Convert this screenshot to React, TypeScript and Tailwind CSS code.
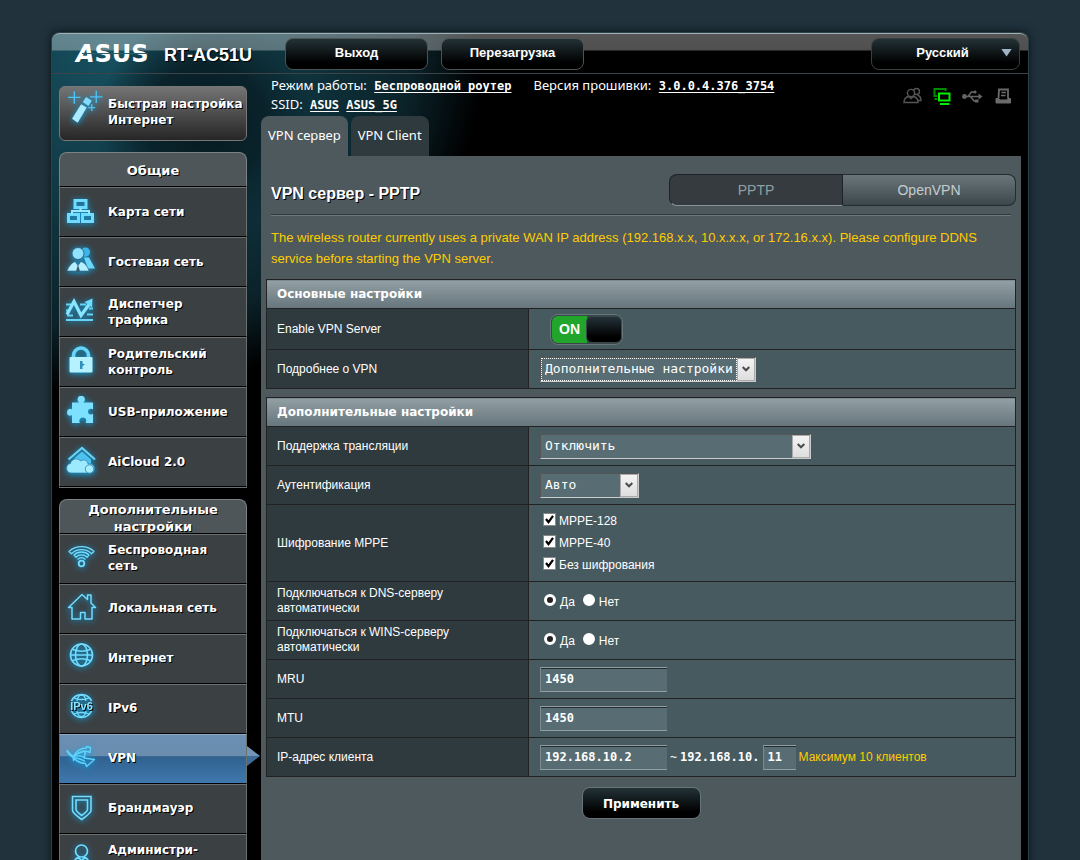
import React, { useState } from 'react';
import clsx from 'clsx';

const shadow = '[text-shadow:1px_1px_0_#000]';
const verdana = "font-['DejaVu_Sans',sans-serif]";
const arial = "font-['Liberation_Sans',sans-serif]";
const noto = "font-['Noto_Sans',sans-serif]";
const mono = "font-['DejaVu_Sans_Mono',monospace]";

/* ---------- icons ---------- */

type IconProps = { children: React.ReactNode; size?: number };

const Glow: React.FC<IconProps> = ({ children, size = 32 }) => (
  <svg
    width={size}
    height={size}
    viewBox="0 0 32 32"
    fill="none"
    stroke="none"
    className="shrink-0 [filter:drop-shadow(0_1px_3px_#0aa5e8)]"
    aria-hidden="true"
  >
    {children}
  </svg>
);

const icons: Record<string, React.ReactNode> = {
  wand: (
    <Glow size={36}>
      <path d="M4.500 26.500 12.500 13.500l5 3L9.500 30z" fill="#a9ecff" />
      <path d="M14 11.500 17 7l5 3.500-3 4.500z" fill="#7fdcff" />
      <path d="M6.500 2v11M1 7.500h11M26 1.500v11M20.500 7h11M22 13.500v6M19 16.500h6" stroke="#4fc4f2" strokeWidth="1.200" />
    </Glow>
  ),
  map: (
    <Glow>
      <path d="M10 4.500h11v7H10zM3.500 18.500h10v7h-10zM17.500 18.500h10v7h-10z" stroke="#6fdcff" strokeWidth="3" />
      <path d="M15.500 12v3.500M7 18v-3h17v3" stroke="#9be9ff" strokeWidth="2" />
    </Glow>
  ),
  guests: (
    <Glow>
      <circle cx="20.500" cy="6" r="4.500" fill="#3db5e8" />
      <path d="M19 11.500h5l6 11h-7z" fill="#6ed6fa" />
      <circle cx="13" cy="7.500" r="6" fill="#8fe3ff" stroke="#37607a" strokeWidth="1" />
      <path d="M2 25c2-5 4.500-8 8-9.500l3 4 3-4c4 1.500 6.500 4.500 8 9.500z" fill="#b4f0ff" stroke="#37607a" strokeWidth=".6" />
      <path d="m13 18.500-2 7h4z" fill="#3b5a68" />
    </Glow>
  ),
  traffic: (
    <Glow>
      <path d="M1 8.500h5M15 8.500h6M24 12.500h4M1 14.500h4M2 19.500h6M22 18.500h6M1 24h27" stroke="#65d3f8" strokeWidth="2" />
      <path d="M2 18.500 9 5.500l7 14 8-11" stroke="#8ae6ff" strokeWidth="3.200" />
      <path d="m19.500 6 8-3.500-.5 9z" fill="#6fdcff" />
    </Glow>
  ),
  lock: (
    <Glow>
      <path d="M8.500 13V9.500a7.500 7.500 0 0 1 15 0V13" stroke="#67d5fa" strokeWidth="3.600" />
      <rect x="4.500" y="11" width="23" height="15.500" rx="1" fill="#b5f1ff" />
      <path d="M15 15h2.500v2.500l2.500 1-2.500 1.500v3H15z" fill="#2f90bd" />
    </Glow>
  ),
  puzzle: (
    <Glow>
      <path
        d="M7 6.500h7c-1-1-1.500-2-1.500-3a3.700 3.700 0 0 1 7.400 0c0 1-.5 2-1.500 3H28v7c-1-1-4.500-1.500-5 1.700-.4 3.600 3.500 4 5 2.300V27h-7.500c1.500-2 1-5.500-2.500-5.500S13.500 25 15 27H7v-8c-1.500 1.500-5 1-5-2.500S5.500 12 7 13.500z"
        fill="#7ee0ff"
      />
    </Glow>
  ),
  cloud: (
    <Glow>
      <path d="M3.500 13.500 17 2l13 11.500" stroke="#67d2f8" strokeWidth="2.200" />
      <path d="M9 12.500 17 5.500l9 8V20H9z" fill="#4fc3ef" />
      <path
        d="M6 27c-5.500 0-6-9-.5-9.500.5-5 8-6 10-2.500 4-2.500 7.500 0 7.500 3 8-1.500 8.500 9 2.500 9z"
        fill="#9deaff"
        stroke="#2c7da3"
        strokeWidth=".7"
      />
      <circle cx="24.500" cy="23" r="4.200" fill="#a9edff" stroke="#2c7da3" strokeWidth=".8" />
    </Glow>
  ),
  wifi: (
    <Glow>
      <g stroke="#71dcff" strokeWidth="1.300" strokeLinejoin="round">
        <path d="M4 9.500c6.500-6.500 18.500-6.500 25 0l-2.500 2.300c-5-5.500-15-5.500-20 0z" />
        <path d="M9 13c4-4 11-4 15 0l-2 2.200c-3-3-8-3-11 0z" />
        <path d="M12.500 17.500c2.500-2.300 5.500-2.300 8 0" />
        <circle cx="16.500" cy="21.500" r="2.800" strokeWidth="1.800" />
      </g>
    </Glow>
  ),
  house: (
    <Glow>
      <path
        d="M7 15.500H3.500L17 2.500l5.500 5V3h3.500v8l4.500 4.500H27v11.500h-7v-6.500h-4.500V27H7z"
        stroke="#71dcff"
        strokeWidth="1.500"
        strokeLinejoin="round"
      />
    </Glow>
  ),
  globe: (
    <Glow>
      <g stroke="#71dcff" strokeWidth="1.600">
        <circle cx="16.500" cy="13" r="11" />
        <ellipse cx="16.500" cy="13" rx="6" ry="11" />
        <path d="M5.500 13h22M8 7.500c5 2 12 2 17 0M8 18.500c5-2 12-2 17 0" />
      </g>
    </Glow>
  ),
  ipv6: (
    <Glow>
      <g stroke="#71dcff" strokeWidth="1.300">
        <path d="M6.500 9a11 11 0 0 1 20 0M6.500 19a11 11 0 0 0 20 0" strokeWidth="1.700" />
        <path d="M12 9c.5-3 2-6 4.500-6s4 3 4.500 6M12 19c.5 3 2 5.500 4.500 5.500s4-2.500 4.500-5.500M9 6c4 2 11 2 15 0M9 22c4-2 11-2 15 0" />
      </g>
      <text x="16.500" y="18" textAnchor="middle" fontSize="11" fontFamily="Liberation Sans" fontWeight="700" fill="#8de6ff">
        IPv6
      </text>
    </Glow>
  ),
  vpn: (
    <Glow>
      <g stroke="#5fd2fb" strokeWidth="1.400" strokeLinejoin="round">
        <path d="M8 14.500C11 9.500 15 6 21.500 6V4.500l4 1-.5 5-2.500-1c-5-1-10 1-14.500 6" />
        <path d="M2 8.500c2 2 3.500 4 6 6 4-1 8-1 11.500 1l.5-4.500c0 3-1 3-1 5l10.500 1.500-8 7-1-3c-5-.5-9-2-11-5l-1 2-.5-3C5.500 14 3 11.500 2 8.500zM8 15.500c4 .5 8 1 12 4M13 11.500l6-2.500 2 3" />
      </g>
    </Glow>
  ),
  shield: (
    <Glow>
      <g stroke="#71dcff" strokeWidth="1.600">
        <path d="M7.500 4.500h18.500v14c0 2-5 6-9.300 9-4.200-3-9.200-7-9.200-9z" />
        <path d="M11 8h11.500v9.500c0 1.500-3 4-5.800 6C14 21.500 11 19 11 17.500z" />
      </g>
    </Glow>
  ),
  admin: (
    <Glow>
      <g stroke="#71dcff" strokeWidth="1.700">
        <circle cx="16.500" cy="9" r="6" />
        <path d="M7.500 27c0-7 3.500-11 6-12l3 4 3-4c2.500 1 6 5 6 12M13 18l3.500 9 3.500-9" />
      </g>
    </Glow>
  ),
};

/* ---------- sidebar ---------- */

const general = [
  { icon: 'map', label: 'Карта сети' },
  { icon: 'guests', label: 'Гостевая сеть' },
  { icon: 'traffic', label: 'Диспетчер трафика' },
  { icon: 'lock', label: 'Родительский контроль' },
  { icon: 'puzzle', label: 'USB-приложение' },
  { icon: 'cloud', label: 'AiCloud 2.0' },
];

const advanced = [
  { icon: 'wifi', label: 'Беспроводная сеть' },
  { icon: 'house', label: 'Локальная сеть' },
  { icon: 'globe', label: 'Интернет' },
  { icon: 'ipv6', label: 'IPv6' },
  { icon: 'vpn', label: 'VPN', active: true },
  { icon: 'shield', label: 'Брандмауэр' },
  { icon: 'admin', label: 'Администри- рование' },
];

interface MenuProps {
  title: string;
  items: { icon: string; label: string; active?: boolean }[];
  itemClass?: string;
}

const Menu: React.FC<MenuProps> = ({ title, items, itemClass }) => (
  <nav className="mb-[11px]">
    <h2
      className={`flex h-[35px] items-center justify-center overflow-hidden rounded-t-lg border border-[#7b8384] border-b-black bg-[#4f5659] px-5 pt-0.5 text-center text-[13px] leading-[17px] font-bold text-white ${shadow}`}
    >
      {title}
    </h2>
    <ul className="border-b border-[#6b7071]">
      {items.map(({ icon, label, active }) => (
        <li key={label} className="relative">
          <a
            href="#"
            className={clsx(
              'flex h-[50px] items-center gap-[11px] border border-[#6b7071] border-b-black pr-2 pl-[5px] text-xs leading-4 font-bold text-white',
              shadow,
              itemClass,
              active
                ? 'border-t-[#90a9c2] bg-[linear-gradient(#6a8fb3,#6a8dae_44%,#30618f_45%,#3f78ae)]'
                : 'bg-[#3b4043]',
            )}
          >
            {icons[icon]}
            <span>{label}</span>
          </a>
          {active && (
            <span className="absolute top-3 left-full h-5 w-[13px] bg-[linear-gradient(#7394b5_50%,#3d6c99_50%)] [clip-path:polygon(0_0,100%_50%,0_100%)]" />
          )}
        </li>
      ))}
    </ul>
  </nav>
);

/* ---------- form parts ---------- */

const TopButton: React.FC<{ children: React.ReactNode }> = ({ children }) => (
  <button
    type="button"
    className={`h-8 w-[143px] rounded-lg border border-[#4c5354] bg-[linear-gradient(#233236,#000_80%)] pb-0.5 text-[13px] font-bold text-white ${arial}`}
  >
    {children}
  </button>
);

const Panel: React.FC<{ title: string; children: React.ReactNode }> = ({ title, children }) => (
  <table className="mb-2 w-full table-fixed border-collapse border border-[#222] text-xs leading-[15px] text-white">
    <colgroup>
      <col className="w-[262px]" />
      <col />
    </colgroup>
    <thead>
      <tr>
        <th
          colSpan={2}
          className={`h-[29px] border border-[#222] bg-[linear-gradient(#92a0a5,#66757c)] px-2.5 text-left text-xs font-bold ${verdana}`}
        >
          {title}
        </th>
      </tr>
    </thead>
    <tbody>{children}</tbody>
  </table>
);

interface RowProps {
  label: string;
  htmlFor?: string;
  height?: string;
  children: React.ReactNode;
}

const Row: React.FC<RowProps> = ({ label, htmlFor, height = 'h-[39px]', children }) => (
  <tr>
    <th scope="row" className={`${height} border border-[#222] bg-[#2f3a3e] px-2.5 text-left font-normal`}>
      {htmlFor ? (
        <label htmlFor={htmlFor} className="block w-[200px]">
          {label}
        </label>
      ) : (
        <span className="block w-[200px]">{label}</span>
      )}
    </th>
    <td className="border border-[#222] bg-[#475a5f] px-[11px]">{children}</td>
  </tr>
);

interface SelectProps {
  id: string;
  value: string;
  width: string;
  focused?: boolean;
}

const Select: React.FC<SelectProps> = ({ id, value, width, focused }) => (
  <div className={`relative h-[25px] border border-t-[#555] border-r-[#ccc] border-b-[#ccc] border-l-[#555] ${width}`}>
    <select
      id={id}
      className={clsx(
        'block h-full w-full appearance-none bg-[#576d73] pb-0.5 pl-1 text-[13px] text-white outline-none',
        mono,
      )}
    >
      <option>{value}</option>
    </select>
    {focused && <span className="pointer-events-none absolute inset-y-0 right-[18px] left-0 border border-dotted border-white" />}
    <span className="pointer-events-none absolute inset-y-0 right-0 flex w-[18px] items-center justify-center border border-[#aaa] bg-[linear-gradient(#f3f3f3,#dedede)]">
      <svg width="8" height="6" viewBox="0 0 8 6" fill="none" stroke="#4a4a4a" strokeWidth="2">
        <path d="m.7 1 3.300 3.300L7.300 1" />
      </svg>
    </span>
  </div>
);

const TextField: React.FC<{ id?: string; value: string; width: string; label?: string }> = ({ id, value, width, label }) => (
  <input
    id={id}
    type="text"
    aria-label={label}
    defaultValue={value}
    className={`h-[25px] border border-r-0 border-t-[#929ea1] border-b-[#929ea1] border-l-[#7d8b8f] bg-[#576d73] pl-1 text-xs font-bold text-white shadow-[inset_0_1px_0_#222c30] outline-none ${mono} ${width}`}
  />
);

const Check: React.FC<{ label: string }> = ({ label }) => (
  <label className="flex h-[22px] items-center gap-[3px]">
    <span className="relative mb-1 size-[13px]">
      <input type="checkbox" defaultChecked className="peer block size-[13px] appearance-none border border-[#888] bg-white" />
      <svg
        viewBox="0 0 13 13"
        className="pointer-events-none absolute inset-0 hidden size-[13px] peer-checked:block"
        fill="none"
        stroke="#000"
        strokeWidth="2.200"
      >
        <path d="m3 6 2.500 3.200L10 2.800" />
      </svg>
    </span>
    {label}
  </label>
);

const YesNo: React.FC<{ name: string }> = ({ name }) => (
  <div className="flex gap-2 pt-0.5 pl-1">
    {['Да', 'Нет'].map((text, i) => (
      <label key={text} className="flex items-center gap-1">
        <input
          type="radio"
          name={name}
          defaultChecked={i === 0}
          className="mb-1 size-3 appearance-none rounded-full border-[3px] border-white bg-white checked:bg-[#222]"
        />
        {text}
      </label>
    ))}
  </div>
);

const InfoLink: React.FC<{ children: React.ReactNode }> = ({ children }) => (
  <a href="#" className={`ml-1 text-xs font-bold underline underline-offset-2 ${mono}`}>
    {children}
  </a>
);

const StatusIcons: React.FC = () => (
  <div className="flex items-center gap-[11px] pt-0.5 pr-[9px]">
    <svg width="19" height="18" viewBox="0 0 19 18" fill="none" stroke="#555" strokeWidth="1.400">
      <circle cx="13.500" cy="4.500" r="3" />
      <path d="M14.500 8c2.500 1 3.500 3.500 3.500 5.500h-3" />
      <circle cx="8" cy="6" r="3.600" fill="#000" />
      <path d="M1 15.500c0-3.500 2-5.500 4.500-6l2.500 2 2.500-2c2.500.5 4.500 2.500 4.500 6z" fill="#000" />
    </svg>
    <svg width="18" height="18" viewBox="0 0 18 18" fill="none">
      <path d="M12.500 4V2H1.500v7H4M1.500 12H4" stroke="#008a00" strokeWidth="2" />
      <path d="M6 6.500h10.500v7H6z" stroke="#00f000" strokeWidth="2" />
      <path d="M7 17h9.500" stroke="#00f000" strokeWidth="2" />
    </svg>
    <svg width="21" height="15" viewBox="0 0 21 15" fill="none" stroke="#666" strokeWidth="1.500">
      <circle cx="2.500" cy="7.500" r="1.700" fill="#666" />
      <path d="M3 7.500h14M6 7.500 9.500 3H12M8.500 7.500l3.500 4.500h2" />
      <path d="m16.500 4.500 4 3-4 3z" fill="#666" stroke="none" />
      <circle cx="13" cy="3" r="1.600" fill="#666" stroke="none" />
      <path d="M13 10.500h3.500v3H13z" fill="#666" stroke="none" />
    </svg>
    <svg width="18" height="16" viewBox="0 0 18 16" fill="none" stroke="#6b6b6b">
      <path d="M4.500 10.500 5 1.500h9v9" strokeWidth="1.800" />
      <path d="M7.500 4.500h4.500M7 7.500h4.500" strokeWidth="1.500" />
      <path d="M2 10.500h2.500l1.500 1.500h6.500l1.500-1.500h2.500V15H2z" fill="#6b6b6b" strokeWidth="1" />
    </svg>
  </div>
);

export default function App() {
  const [enabled, setEnabled] = useState(true);

  return (
    <div className={`min-h-screen bg-[#21323d] pt-8 text-white ${verdana}`}>
      <div className="mx-auto max-w-[978px] rounded-t-lg border border-b-0 border-[#2d4149] bg-black bg-[radial-gradient(circle_at_155px_90px,#061a20_0,#0a232b_60px,transparent_110px),radial-gradient(ellipse_at_60px_20px,#17505f_0,#103944_160px,#0b2229_300px,transparent_370px)] shadow-[0_0_10px_#0a1317]">
        <header className="flex h-[41px] items-center rounded-t-lg border-t border-b border-t-[#a0b0b4] border-b-[#3c444a] bg-[linear-gradient(#ffffff55,#ffffff50_16px,transparent_17px)] pr-2 pl-6">
          <div className="relative flex h-5 w-[88px] items-center text-2xl leading-none font-bold" role="img" aria-label="ASUS">
            <span className="italic">A</span>SUS
            <span className="absolute top-[9px] left-1.5 h-px w-[66px] bg-[#2c5f6b]" />
          </div>
          <h1 className={`w-[121px] pt-0.5 text-lg font-bold ${shadow} ${arial}`}>RT-AC51U</h1>
          <div className="flex gap-[13px]">
            <TopButton>Выход</TopButton>
            <TopButton>Перезагрузка</TopButton>
          </div>
          <button
            type="button"
            className={`ml-auto flex h-8 w-[149px] items-center rounded-lg border border-[#383f40] bg-[linear-gradient(#233236,#000_80%)] pr-[7px] pb-0.5 text-[13px] font-bold ${arial}`}
          >
            <span className="flex-1 pl-3">Русский</span>
            <span className="h-2 w-[11px] bg-[#9fb4c4] [clip-path:polygon(0_0,100%_0,50%_100%)]" />
          </button>
        </header>

        <div className="flex">
          <aside className="w-[209px] shrink-0 pt-3 pr-[14px] pl-[7px]">
            <button
              type="button"
              className={`mb-[11px] flex h-[55px] w-full items-start gap-[5px] rounded-md border border-[#777] bg-[linear-gradient(#747474,#262626)] pt-0.5 pl-[7px] text-left text-xs leading-4 font-bold ${shadow}`}
            >
              {icons.wand}
              <span className="pt-[7px]">Быстрая настройка Интернет</span>
            </button>
            <Menu title="Общие" items={general} />
            <Menu title="Дополнительные настройки" items={advanced} itemClass="pb-[3px]" />
          </aside>

          <main className="mr-[7px] min-w-0 flex-1">
            <div className="flex h-[42px] justify-between">
              <div className={`pt-0.5 pl-2.5 text-[13px] leading-[19px] ${noto}`}>
                <p>
                  Режим работы: <InfoLink>Беспроводной роутер</InfoLink>
                  <span className="ml-[22px]">Версия прошивки:</span> <InfoLink>3.0.0.4.376_3754</InfoLink>
                </p>
                <p>
                  SSID: <InfoLink>ASUS</InfoLink> <InfoLink>ASUS_5G</InfoLink>
                </p>
              </div>
              <StatusIcons />
            </div>

            <div className={`flex gap-[3px] text-[13px] ${noto}`}>
              <a href="#" className="flex h-10 items-center rounded-t-lg bg-[#4d595d] px-[7px]">
                VPN сервер
              </a>
              <a href="#" className="flex h-10 items-center rounded-t-lg bg-[#2f3a3e] px-[7px]">
                VPN Client
              </a>
            </div>

            <section className={`bg-[#4d595d] px-[5px] pt-[18px] pb-20 ${arial}`}>
              <div className="flex items-start justify-between pl-[5px]">
                <h2 className={`pt-2 text-base font-bold ${shadow}`}>VPN сервер - PPTP</h2>
                <div className="flex h-8 w-[347px] text-sm">
                  <button type="button" className="flex-1 rounded-l-lg border border-[#1d2426] border-b-[#8a9496] bg-[#353b3e] text-[#8fa0a5]">
                    PPTP
                  </button>
                  <button type="button" className="flex-1 rounded-r-lg border border-l-0 border-[#222b2e] bg-[linear-gradient(#6b767a,#3c474b)] text-[#c5cdd0]">
                    OpenVPN
                  </button>
                </div>
              </div>
              <hr className="mx-[5px] mt-2 h-0.5 border-t border-b border-t-[#30393c] border-b-[#6b777b]" />

              <p className="mt-[11px] mb-[10px] px-[5px] text-[13px] leading-[21px] text-[#fc0]">
                The wireless router currently uses a private WAN IP address (192.168.x.x, 10.x.x.x, or 172.16.x.x). Please
                configure DDNS service before starting the VPN server.
              </p>

              <Panel title="Основные настройки">
                <Row label="Enable VPN Server" height="h-[41px]">
                  <button
                    type="button"
                    role="switch"
                    aria-checked={enabled}
                    aria-label="Enable VPN Server"
                    onClick={() => setEnabled(!enabled)}
                    className={clsx(
                      'ml-2.5 flex h-[31px] w-[73px] items-center rounded-lg border border-[#66757a] bg-[#3a474b] p-px',
                      !enabled && 'flex-row-reverse',
                    )}
                  >
                    <span
                      className={clsx(
                        'flex h-full flex-1 items-center justify-center rounded-l-md text-sm font-bold',
                        enabled ? 'bg-[#22a52b]' : 'bg-[#555]',
                      )}
                    >
                      {enabled ? 'ON' : 'OFF'}
                    </span>
                    <span className="-mx-px h-full w-9 rounded-md border border-[#39474b] bg-[linear-gradient(#233238,#000_80%)]" />
                  </button>
                </Row>
                <Row label="Подробнее о VPN" htmlFor="details">
                  <Select id="details" value="Дополнительные настройки" width="w-[216px]" focused />
                </Row>
              </Panel>

              <Panel title="Дополнительные настройки">
                <Row label="Поддержка трансляции" htmlFor="broadcast">
                  <Select id="broadcast" value="Отключить" width="w-[271px]" />
                </Row>
                <Row label="Аутентификация" htmlFor="auth">
                  <Select id="auth" value="Авто" width="w-[99px]" />
                </Row>
                <Row label="Шифрование MPPE" height="h-[77px]">
                  <div className="pl-[3px]">
                    <Check label="MPPE-128" />
                    <Check label="MPPE-40" />
                    <Check label="Без шифрования" />
                  </div>
                </Row>
                <Row label="Подключаться к DNS-серверу автоматически">
                  <YesNo name="dns" />
                </Row>
                <Row label="Подключаться к WINS-серверу автоматически">
                  <YesNo name="wins" />
                </Row>
                <Row label="MRU" htmlFor="mru">
                  <TextField id="mru" value="1450" width="w-[127px]" />
                </Row>
                <Row label="MTU" htmlFor="mtu">
                  <TextField id="mtu" value="1450" width="w-[127px]" />
                </Row>
                <Row label="IP-адрес клиента" htmlFor="ip-from">
                  <div className="flex items-center gap-[3px]">
                    <TextField id="ip-from" value="192.168.10.2" width="w-[127px]" />
                    <span>~</span>
                    <span className={`font-bold ${mono}`}>192.168.10.</span>
                    <TextField label="IP-адрес клиента, конец диапазона" value="11" width="w-[33px]" />
                    <span className="text-[#fc0]">Максимум 10 клиентов</span>
                  </div>
                </Row>
              </Panel>

              <div className="flex justify-center pt-0.5">
                <button
                  type="button"
                  className={`h-8 w-[119px] rounded-lg border border-[#66757a] bg-[linear-gradient(#233238,#000_80%)] pt-0.5 text-xs font-bold ${verdana}`}
                >
                  Применить
                </button>
              </div>
            </section>
          </main>
        </div>
      </div>
    </div>
  );
}
